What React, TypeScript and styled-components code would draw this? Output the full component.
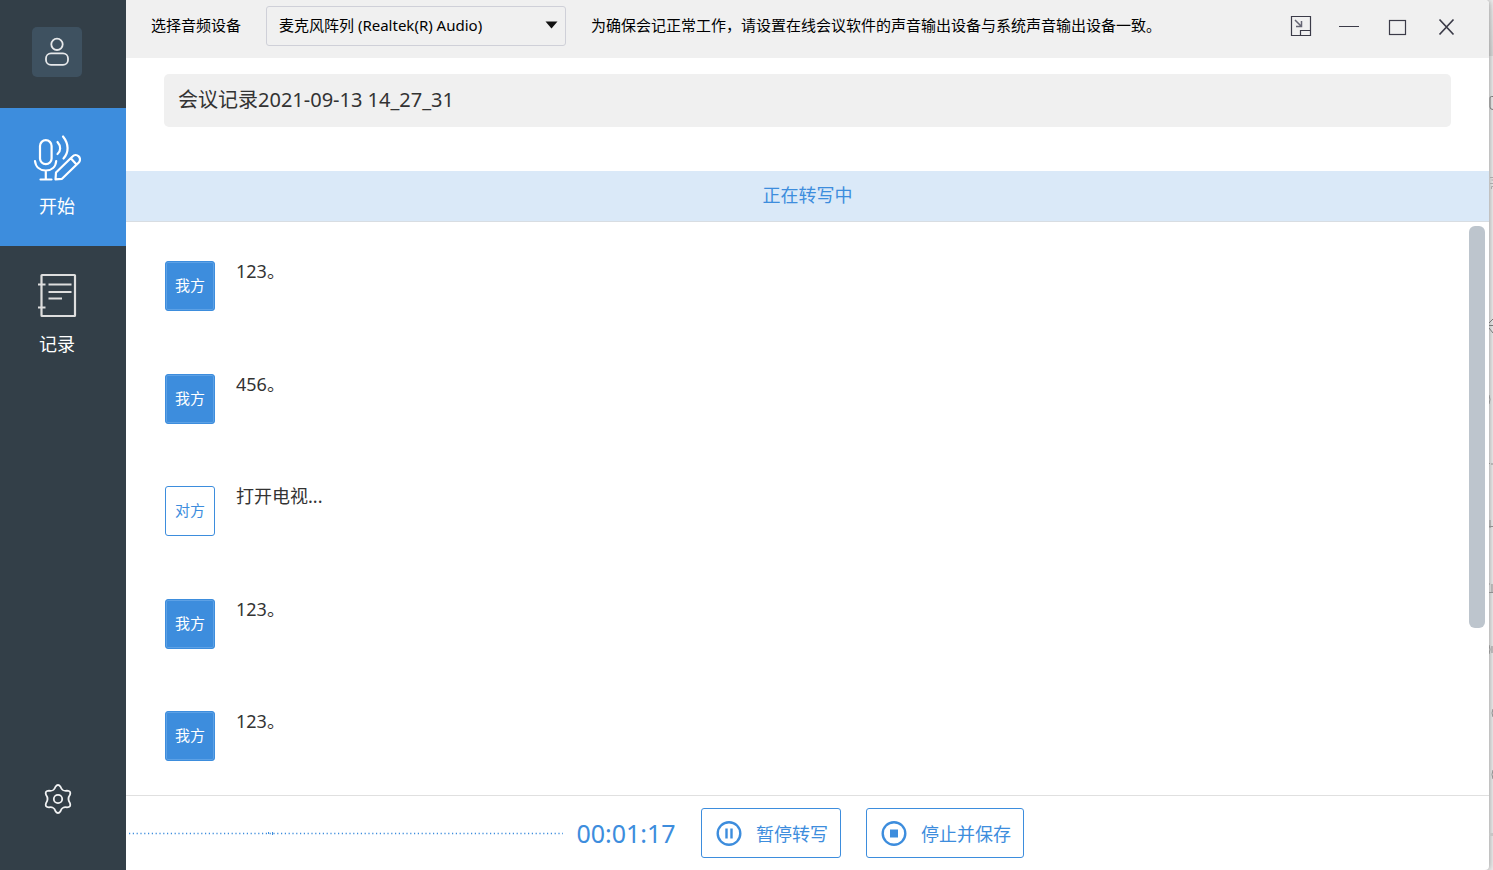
import React from "react";
import styled, { createGlobalStyle } from "styled-components";

const BLUE = "#3d8ddd";

const GlobalStyle = createGlobalStyle`
  *, *::before, *::after { box-sizing: border-box; }
  html, body, #root { height: 100%; margin: 0; }
  body {
    background: #ececec;
    color: #000;
    font-family: "Noto Sans", "Noto Sans CJK SC", sans-serif;
    overflow: hidden;
  }
  button, select, input { font: inherit; margin: 0; }
`;

const Desktop = styled.div`
  display: flex;
  min-height: 100%;
`;

const Backdrop = styled.svg`
  flex: 0 0 4px;
  width: 4px;
  height: 100vh;
`;

const AppWindow = styled.div`
  flex: 1;
  min-width: 0;
  height: 100vh;
  display: flex;
  background: #fff;
  border-radius: 0 4px 4px 0;
  overflow: hidden;
  box-shadow: 0 0 6px rgba(0, 0, 0, 0.4);
`;

const Sidebar = styled.nav`
  flex: 0 0 126px;
  display: flex;
  flex-direction: column;
  background: #333f48;
`;

const Avatar = styled.button`
  display: flex;
  align-items: center;
  justify-content: center;
  width: 50px;
  height: 50px;
  margin: 27px 0 31px 32px;
  padding: 0;
  border: 0;
  border-radius: 5px;
  background: #3e5160;
`;

const NavItem = styled.button<{ $active?: boolean }>`
  display: flex;
  flex-direction: column;
  align-items: center;
  gap: 12px;
  height: 138px;
  padding: 26px 12px 0 0;
  border: 0;
  background: ${(p) => (p.$active ? BLUE : "transparent")};
  color: #fff;
  font-size: 18px;
  line-height: 24px;
`;

const SettingsButton = styled.button`
  display: flex;
  margin: auto 0 55px 43px;
  width: 30px;
  padding: 0;
  border: 0;
  background: transparent;
`;

const Main = styled.main`
  flex: 1;
  min-width: 0;
  display: flex;
  flex-direction: column;
`;

const TopBar = styled.header`
  flex: 0 0 58px;
  display: flex;
  align-items: center;
  padding: 0 31px 6px 25px;
  background: #f0f0f0;
  font-size: 15px;
  line-height: 20px;
  white-space: nowrap;
`;

const DeviceLabel = styled.label`
  margin-right: 25px;
  padding-bottom: 2px;
`;

const Notice = styled.span`
  padding-bottom: 2px;
`;

const SelectWrap = styled.div`
  position: relative;
  width: 300px;
  margin-right: 25px;
`;

const DeviceSelect = styled.select`
  appearance: none;
  display: block;
  width: 100%;
  height: 40px;
  padding: 0 32px 2px 12px;
  border: 1px solid #cfd0d8;
  border-radius: 3px;
  background: #f0f0f0;
  color: #000;
`;

const SelectArrow = styled.svg`
  position: absolute;
  right: 8px;
  top: 15px;
  pointer-events: none;
`;

const WindowControls = styled.div`
  display: flex;
  align-items: center;
  gap: 24px;
  margin-left: auto;
`;

const ControlButton = styled.button`
  display: flex;
  align-items: center;
  justify-content: center;
  padding: 0;
  border: 0;
  background: transparent;
`;

const TitleInput = styled.input`
  flex: 0 0 53px;
  margin: 16px 38px 44px;
  padding: 0 14px 4px;
  border: 0;
  border-radius: 5px;
  background: #f0f0f0;
  color: #333;
  font-size: 20px;
`;

const StatusBanner = styled.div`
  flex: 0 0 51px;
  border-bottom: 1px solid #d8dde2;
  background: #dae9f8;
  color: ${BLUE};
  font-size: 18px;
  line-height: 48px;
  text-align: center;
`;

const Transcript = styled.section`
  flex: 1;
  min-height: 0;
  display: flex;
  padding: 4px 4px 0 39px;
`;

const MessageList = styled.ul`
  flex: 1;
  display: flex;
  flex-direction: column;
  justify-content: space-between;
  margin: 0;
  padding: 35px 0 34px;
  list-style: none;
`;

const Message = styled.li`
  display: flex;
  gap: 21px;
`;

const Speaker = styled.span<{ $self: boolean }>`
  width: 50px;
  height: 50px;
  border: 1px solid ${BLUE};
  border-radius: 3px;
  background: ${(p) => (p.$self ? BLUE : "#fff")};
  box-shadow: ${(p) => (p.$self ? "inset 0 0 0 1px #5da1e5" : "none")};
  color: ${(p) => (p.$self ? "#fff" : BLUE)};
  font-size: 15px;
  line-height: 46px;
  text-align: center;
`;

const MessageText = styled.p`
  margin: 0;
  color: #333;
  font-size: 18px;
  line-height: 20px;
`;

const ScrollThumb = styled.div`
  width: 16px;
  height: 402px;
  max-height: 100%;
  border-radius: 6px;
  background: #bdc5cd;
`;

const Footer = styled.footer`
  flex: 0 0 75px;
  display: flex;
  align-items: center;
  border-top: 1px solid #e0e0e0;
  padding-left: 2px;
`;

const Wave = styled.svg`
  flex: 0 0 436px;
  height: 8px;
`;

const Timer = styled.time`
  width: 100px;
  margin: 0 25px 0 12px;
  color: ${BLUE};
  font-size: 25px;
  line-height: 36px;
  text-align: center;
  white-space: nowrap;
`;

const ActionButton = styled.button`
  display: flex;
  align-items: center;
  gap: 14px;
  height: 50px;
  margin-right: 25px;
  padding: 0 12px 0 14px;
  border: 1px solid ${BLUE};
  border-radius: 3px;
  background: #fff;
  color: ${BLUE};
  font-size: 18px;
  white-space: nowrap;
`;

const UserIcon = () => (
  <svg width="26" height="30" viewBox="0 0 26 30" fill="none" stroke="#e6e8ea" strokeWidth="1.8">
    <circle cx="13" cy="7.3" r="5.7" />
    <rect x="2" y="16.3" width="22" height="11.6" rx="5" />
  </svg>
);

const MicPenIcon = () => (
  <svg width="48" height="48" viewBox="0 0 48 48" fill="none" stroke="#fff" strokeWidth="2.2" strokeLinecap="round" strokeLinejoin="round">
    <rect x="7" y="6.2" width="11.6" height="24" rx="5.8" />
    <path d="M2 27c.6 6 5 9.500 10.800 9.500S22.800 33 23.200 27M12.800 36.500V45.500M7.500 45.500H18.500" />
    <path d="M24.500 8C28 12 28 17 24.500 20M30 2.500C36 10 36 18.500 30.500 24.500" />
    <path d="M22.500 45.300L23 38.500 39.500 22.500A4 4 0 0 1 45.800 28.500L29 44.800ZM38 24.500L43.500 30.500" />
  </svg>
);

const NotebookIcon = () => (
  <svg width="40" height="48" viewBox="0 0 40 48" fill="none" stroke="#dedede" strokeWidth="2.2">
    <rect x="4.500" y="3" width="33.500" height="41" rx="0.500" />
    <path d="M1 12.500H8.500M1 35.500H8.500M11.500 12.500H34.500M11.500 20H34.500M11.500 26.500H25" />
  </svg>
);

const GearIcon = () => (
  <svg width="30" height="32" viewBox="0 0 30 32" fill="none" stroke="#f2f3f4" strokeWidth="1.8" strokeLinejoin="round">
    <path d="M12.500 3.800Q15 0.200 17.500 3.800C18.700 7 20 8.200 24 7.700Q28.400 7.800 27 11.800C24.800 14.800 24.800 17.200 27 20.200Q28.400 24.200 24 24.300C20 23.800 18.700 25 17.500 28.200Q15 31.800 12.500 28.200C11.300 25 10 23.800 6 24.300Q1.600 24.200 3 20.200C5.200 17.200 5.200 14.800 3 11.800Q1.600 7.800 6 7.700C10 8.200 11.300 7 12.500 3.800Z" />
    <circle cx="15" cy="16" r="4.200" />
  </svg>
);

const PauseIcon = () => (
  <svg width="26" height="26" viewBox="0 0 26 26" fill="none" stroke={BLUE} strokeWidth="2.400">
    <circle cx="13" cy="13.500" r="11.300" />
    <path d="M10.500 8.500V18.500M15.500 8.500V18.500" />
  </svg>
);

const StopIcon = () => (
  <svg width="26" height="26" viewBox="0 0 26 26" fill="none" stroke={BLUE} strokeWidth="2.400">
    <circle cx="13" cy="13.500" r="11.300" />
    <rect x="9" y="9.500" width="8" height="8" fill={BLUE} stroke="none" />
  </svg>
);

const BackdropEdge = () => (
  <Backdrop aria-hidden="true" fill="none" stroke="#8e8e8e">
    <defs>
      <linearGradient id="titleShade" x1="0" y1="0" x2="0" y2="1">
        <stop offset="0" stopColor="#000" stopOpacity="0" />
        <stop offset="1" stopColor="#000" stopOpacity="0.08" />
      </linearGradient>
    </defs>
    <rect width="4" height="56" fill="url(#titleShade)" stroke="none" />
    <path d="M4 96.500H2.500Q1 96.500 1 98V107Q1 109.500 4 109.500" stroke="#777" />
    <path d="M1 177.500H4M2.500 180H4M1 183.500H4M2.500 189V186.500H4" stroke="#aaa" />
    <path d="M0 323L4 319M0 325.500H4M0 328L4 333" stroke="#777" />
    <path d="M0 395Q2 399.500 0 404M0 463.500H1M2 464H4M1 520V528M0 526.500H4M0 584H1M3 584V592M0 592.500H4M0 645Q2 649.500 0 654M3 646V653" />
    <path d="M4 709Q2 713 4 717M4 770Q2 774.500 4 779" />
    <rect y="833" width="4" height="3" fill="#c6c6c6" stroke="none" />
  </Backdrop>
);

const messages = [
  { self: true, text: "123。" },
  { self: true, text: "456。" },
  { self: false, text: "打开电视..." },
  { self: true, text: "123。" },
  { self: true, text: "123。" },
];

export default function App() {
  return (
    <Desktop>
      <GlobalStyle />
      <AppWindow>
        <Sidebar>
          <Avatar aria-label="用户"><UserIcon /></Avatar>
          <NavItem $active><MicPenIcon />开始</NavItem>
          <NavItem><NotebookIcon />记录</NavItem>
          <SettingsButton aria-label="设置"><GearIcon /></SettingsButton>
        </Sidebar>
        <Main>
          <TopBar>
            <DeviceLabel htmlFor="device">选择音频设备</DeviceLabel>
            <SelectWrap>
              <DeviceSelect id="device">
                <option>麦克风阵列 (Realtek(R) Audio)</option>
              </DeviceSelect>
              <SelectArrow width="13" height="8" viewBox="0 0 13 8"><path d="M0.500 0.500H12.500L6.500 7.500Z" fill="#111" /></SelectArrow>
            </SelectWrap>
            <Notice>为确保会记正常工作，请设置在线会议软件的声音输出设备与系统声音输出设备一致。</Notice>
            <WindowControls>
              <ControlButton aria-label="小窗模式">
                <svg width="24" height="24" viewBox="0 0 24 24" fill="none" stroke="#3b3b48">
                  <path d="M1.500 2.500H20.500V21.500H1.500ZM10.500 21V16.500H20" strokeWidth="1.200" />
                  <path d="M5 6L11 12M11.500 7V12.500H6" strokeWidth="1.500" stroke="#666674" />
                </svg>
              </ControlButton>
              <ControlButton aria-label="最小化">
                <svg width="24" height="24" viewBox="0 0 24 24" stroke="#3b3b48"><path d="M1 12.500H21" /></svg>
              </ControlButton>
              <ControlButton aria-label="最大化">
                <svg width="24" height="24" viewBox="0 0 24 24" fill="none" stroke="#3b3b48" strokeWidth="1.200"><rect x="3.500" y="6.500" width="16" height="14" /></svg>
              </ControlButton>
              <ControlButton aria-label="关闭">
                <svg width="24" height="24" viewBox="0 0 24 24" stroke="#3b3b48" strokeWidth="1.700"><path d="M5.500 5.500L19.500 20.500M19.500 5.500L5.500 20.500" /></svg>
              </ControlButton>
            </WindowControls>
          </TopBar>
          <TitleInput aria-label="会议标题" defaultValue="会议记录2021-09-13 14_27_31" />
          <StatusBanner role="status">正在转写中</StatusBanner>
          <Transcript>
            <MessageList>
              {messages.map((m, i) => (
                <Message key={i}>
                  <Speaker $self={m.self}>{m.self ? "我方" : "对方"}</Speaker>
                  <MessageText>{m.text}</MessageText>
                </Message>
              ))}
            </MessageList>
            <ScrollThumb />
          </Transcript>
          <Footer>
            <Wave viewBox="0 0 436 8">
              <path d="M1 4.500H435" stroke={BLUE} strokeWidth="1.300" strokeDasharray="1.200 2.600" />
              <path d="M140.500 3V5M144.500 3V6" stroke={BLUE} />
            </Wave>
            <Timer>00:01:17</Timer>
            <ActionButton><PauseIcon />暂停转写</ActionButton>
            <ActionButton><StopIcon />停止并保存</ActionButton>
          </Footer>
        </Main>
      </AppWindow>
      <BackdropEdge />
    </Desktop>
  );
}
